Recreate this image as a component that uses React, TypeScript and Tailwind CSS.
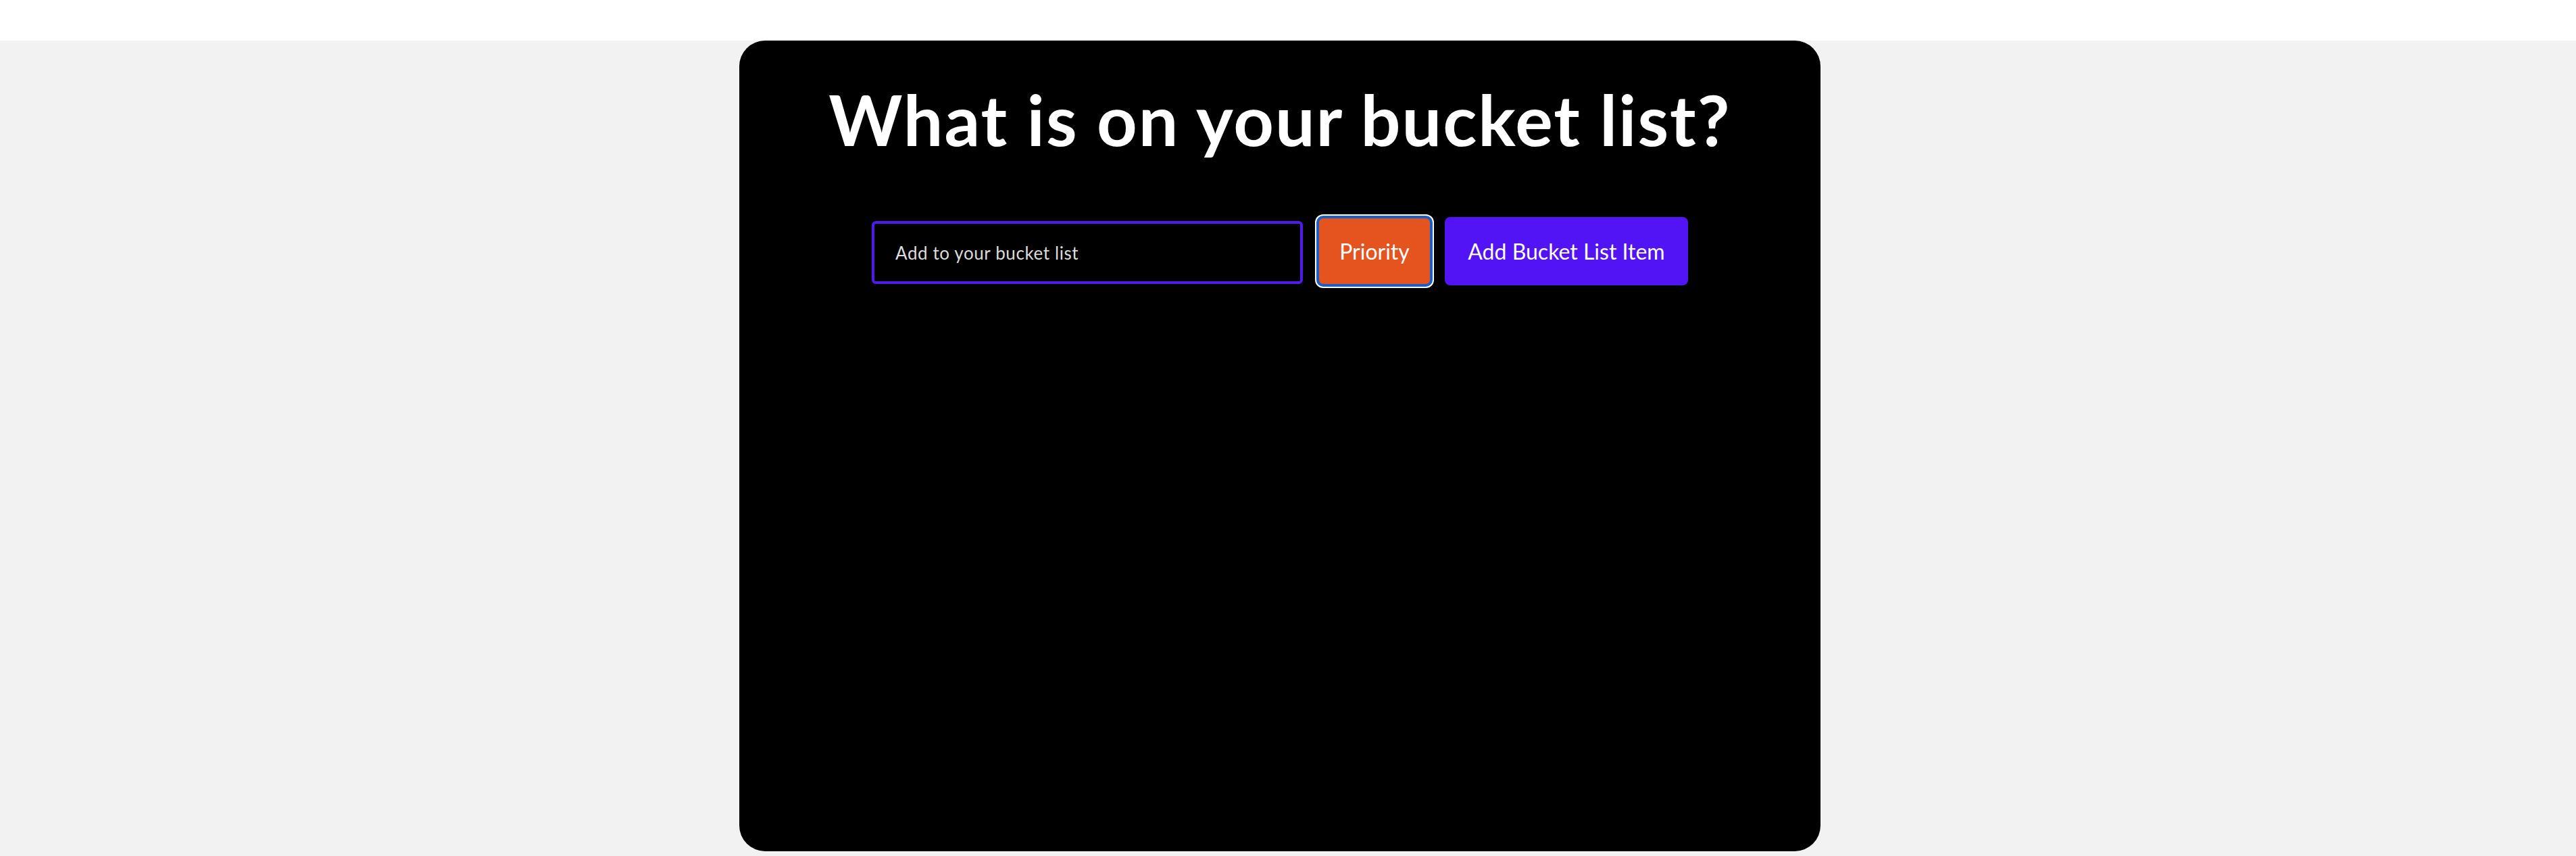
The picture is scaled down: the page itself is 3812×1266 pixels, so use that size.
import { useState } from "react";

export default function App() {
  const [item, setItem] = useState("");

  return (
    <div className="min-h-screen bg-white pt-[60px] font-['Lato','Open_Sans',sans-serif]">
      <main className="flex h-[1206px] justify-center bg-[#f2f2f2] pr-[24px]">
        <section className="flex h-[1199px] w-[1600px] flex-col items-center rounded-[38px] bg-black">
          <h1 className="mt-[64px] text-[104px] font-bold leading-none tracking-[2px] text-white">
            What is on your bucket list?
          </h1>
          <form
            className="mt-[93px] flex items-start"
            onSubmit={(e) => e.preventDefault()}
          >
            <input
              value={item}
              onChange={(e) => setItem(e.target.value)}
              placeholder="Add to your bucket list"
              className="mt-[6px] h-[93px] w-[638px] rounded-[6px] border-4 border-[#4f1af0] bg-black px-[31px] text-[26px] tracking-[0.6px] text-white outline-none placeholder:text-[#dcdcdc]"
            />
            <button
              type="button"
              className="ml-[24px] mt-[2px] h-[97px] w-[164px] rounded-[6px] bg-[#e5531f] text-[32px] text-white shadow-[0_0_0_4px_#1a5fc8,0_0_0_6px_#ffffff]"
            >
              Priority
            </button>
            <button
              type="submit"
              className="ml-[22px] h-[101px] w-[360px] rounded-[8px] bg-[#5214f5] text-[32px] text-white"
            >
              Add Bucket List Item
            </button>
          </form>
        </section>
      </main>
    </div>
  );
}
